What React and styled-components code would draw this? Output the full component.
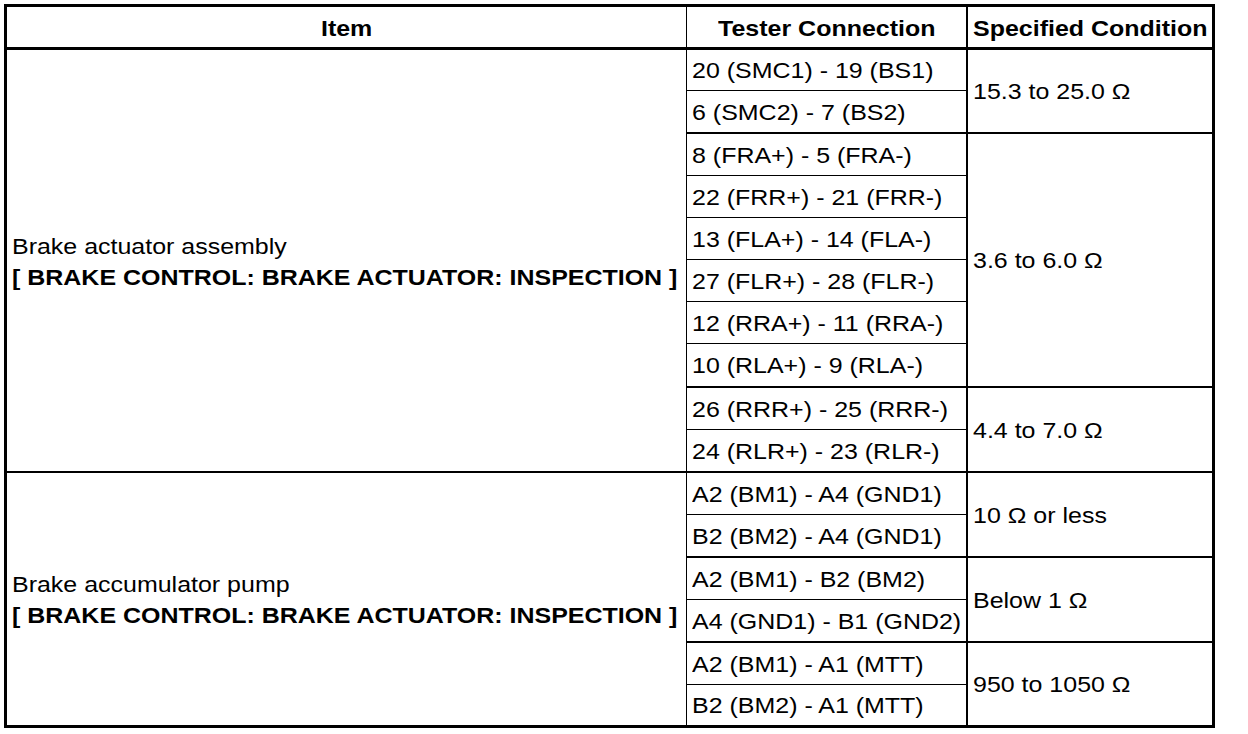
import React from "react";
import styled, { createGlobalStyle } from "styled-components";

const Global = createGlobalStyle`
  html, body { margin: 0; padding: 0; background: #fff; }
  body { font-family: "Liberation Sans", Arial, sans-serif; color: #000; }
`;

const Page = styled.div`
  padding: 4px 0 0 4px;
`;

const Table = styled.div`
  width: 1211px;
  box-sizing: border-box;
  border: 3px solid #000;
  font-size: 22px;
  line-height: 24px;
`;

const Header = styled.div`
  display: grid;
  grid-template-columns: 680px 281px 1fr;
  border-bottom: 3px solid #000;
`;

const HeadCell = styled.div`
  height: 40px;
  box-sizing: border-box;
  padding-top: 3px;
  display: flex;
  align-items: center;
  justify-content: center;
  font-weight: bold;
  border-right: ${(p) => p.$line || 0}px solid #000;
`;

const Text = styled.span`
  display: inline-block;
  white-space: nowrap;
  transform: scaleX(1.135);
  transform-origin: ${(p) => (p.$center ? "center" : "left")} center;
  font-weight: ${(p) => (p.$bold ? "bold" : "normal")};
`;

const Group = styled.div`
  display: grid;
  grid-template-columns: 680px 1fr;
  border-top: ${(p) => (p.$first ? 0 : 2)}px solid #000;
`;

const ItemCell = styled.div`
  box-sizing: border-box;
  border-right: 1px solid #000;
  display: flex;
  flex-direction: column;
  justify-content: center;
  padding: 2px 0 0 5px;
  line-height: 31px;
`;

const SubList = styled.div`
  display: flex;
  flex-direction: column;
`;

const Sub = styled.div`
  display: grid;
  grid-template-columns: 281px 1fr;
  border-top: ${(p) => (p.$first ? 0 : 2)}px solid #000;
`;

const TesterList = styled.div`
  display: flex;
  flex-direction: column;
  border-right: 2px solid #000;
`;

const TesterRow = styled.div`
  height: ${(p) => p.$h}px;
  display: flex;
  align-items: center;
  padding: 2px 0 0 5px;
  box-sizing: content-box;
  border-top: ${(p) => (p.$first ? 0 : 1)}px solid #000;
`;

const SpecCell = styled.div`
  display: flex;
  align-items: center;
  padding: 2px 0 0 5px;
`;

const groups = [
  {
    title: "Brake actuator assembly",
    link: "[ BRAKE CONTROL: BRAKE ACTUATOR: INSPECTION ]",
    subs: [
      { value: "15.3 to 25.0 Ω", rows: [["20 (SMC1) - 19 (BS1)", 38], ["6 (SMC2) - 7 (BS2)", 39]] },
      {
        value: "3.6 to 6.0 Ω",
        rows: [
          ["8 (FRA+) - 5 (FRA-)", 39],
          ["22 (FRR+) - 21 (FRR-)", 39],
          ["13 (FLA+) - 14 (FLA-)", 39],
          ["27 (FLR+) - 28 (FLR-)", 39],
          ["12 (RRA+) - 11 (RRA-)", 39],
          ["10 (RLA+) - 9 (RLA-)", 40],
        ],
      },
      { value: "4.4 to 7.0 Ω", rows: [["26 (RRR+) - 25 (RRR-)", 39], ["24 (RLR+) - 23 (RLR-)", 39]] },
    ],
  },
  {
    title: "Brake accumulator pump",
    link: "[ BRAKE CONTROL: BRAKE ACTUATOR: INSPECTION ]",
    subs: [
      { value: "10 Ω or less", rows: [["A2 (BM1) - A4 (GND1)", 39], ["B2 (BM2) - A4 (GND1)", 39]] },
      { value: "Below 1 Ω", rows: [["A2 (BM1) - B2 (BM2)", 39], ["A4 (GND1) - B1 (GND2)", 39]] },
      { value: "950 to 1050 Ω", rows: [["A2 (BM1) - A1 (MTT)", 39], ["B2 (BM2) - A1 (MTT)", 38]] },
    ],
  },
];

export default function App() {
  return (
    <Page>
      <Global />
      <Table>
        <Header>
          <HeadCell $line={1}>
            <Text $bold $center>Item</Text>
          </HeadCell>
          <HeadCell $line={2}>
            <Text $bold $center>Tester Connection</Text>
          </HeadCell>
          <HeadCell>
            <Text $bold $center>Specified Condition</Text>
          </HeadCell>
        </Header>
        {groups.map((g, gi) => (
          <Group key={gi} $first={gi === 0}>
            <ItemCell>
              <div><Text>{g.title}</Text></div>
              <div><Text $bold>{g.link}</Text></div>
            </ItemCell>
            <SubList>
              {g.subs.map((s, si) => (
                <Sub key={si} $first={si === 0}>
                  <TesterList>
                    {s.rows.map(([r, h], ri) => (
                      <TesterRow key={ri} $first={ri === 0} $h={h}>
                        <Text>{r}</Text>
                      </TesterRow>
                    ))}
                  </TesterList>
                  <SpecCell>
                    <Text>{s.value}</Text>
                  </SpecCell>
                </Sub>
              ))}
            </SubList>
          </Group>
        ))}
      </Table>
    </Page>
  );
}
